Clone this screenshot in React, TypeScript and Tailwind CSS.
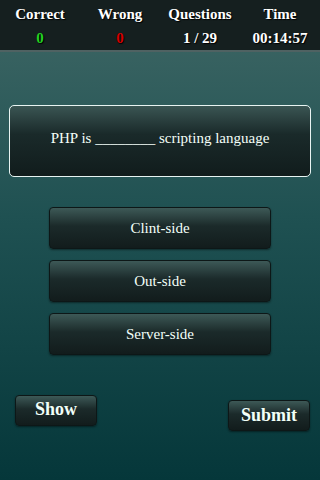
import React from 'react';

const serif = "font-[family-name:'Liberation_Serif','Times_New_Roman',serif]";

const stats = [
  { label: 'Correct', value: '0', color: 'text-[#22d022]' },
  { label: 'Wrong', value: '0', color: 'text-[#d40000]' },
  { label: 'Questions', value: '1 / 29', color: 'text-white' },
  { label: 'Time', value: '00:14:57', color: 'text-white' },
];

const options = ['Clint-side', 'Out-side', 'Server-side'];

const btn =
  'bg-[linear-gradient(to_bottom,#3d5957_0%,#1b2a2a_45%,#121c1c_100%)] border border-[#0d1717] rounded-[4px] shadow-[0_1px_2px_rgba(0,0,0,0.45)] text-[#f2fff8]';

export default function App() {
  return (
    <div
      className={`${serif} w-[320px] h-[480px] overflow-hidden flex flex-col bg-[linear-gradient(to_bottom,#3f6765_0%,#1f5152_45%,#05373a_100%)]`}
    >
      {/* score bar */}
      <div className="h-[50px] bg-[#151f1f] grid grid-cols-4 shrink-0">
        {stats.map((s) => (
          <div key={s.label} className="flex flex-col items-center pt-[4px]">
            <span className="text-[15px] font-bold leading-[20px] text-white [text-shadow:1px_1px_1px_#000]">
              {s.label}
            </span>
            <span className={`text-[15px] font-bold leading-[20px] mt-[4px] ${s.color} [text-shadow:1px_1px_1px_#000]`}>
              {s.value}
            </span>
          </div>
        ))}
      </div>
      <div className="h-[2px] bg-[#4f6262] shrink-0" />

      {/* question */}
      <div className="mt-[53px] mx-[9px] h-[72px] rounded-[5px] border border-[#e8f4f2] bg-[linear-gradient(to_bottom,#3a5553_0%,#1a2a2a_40%,#111c1c_100%)] flex items-center justify-center pb-[6px]">
        <span className="text-[15px] text-[#f4fff8]">PHP is ________ scripting language</span>
      </div>

      {/* options */}
      <div className="mt-[30px] flex flex-col items-center gap-[11px]">
        {options.map((o) => (
          <button key={o} className={`${btn} w-[222px] h-[42px] text-[15px] flex items-center justify-center`}>
            {o}
          </button>
        ))}
      </div>

      {/* actions */}
      <div className="mt-[40px] flex items-start justify-between pl-[15px] pr-[10px]">
        <button className={`${btn} w-[82px] h-[31px] text-[18px] font-bold flex items-center justify-center pb-[3px]`}>
          Show
        </button>
        <button className={`${btn} w-[82px] h-[31px] mt-[5px] text-[18px] font-bold flex items-center justify-center`}>
          Submit
        </button>
      </div>
    </div>
  );
}
